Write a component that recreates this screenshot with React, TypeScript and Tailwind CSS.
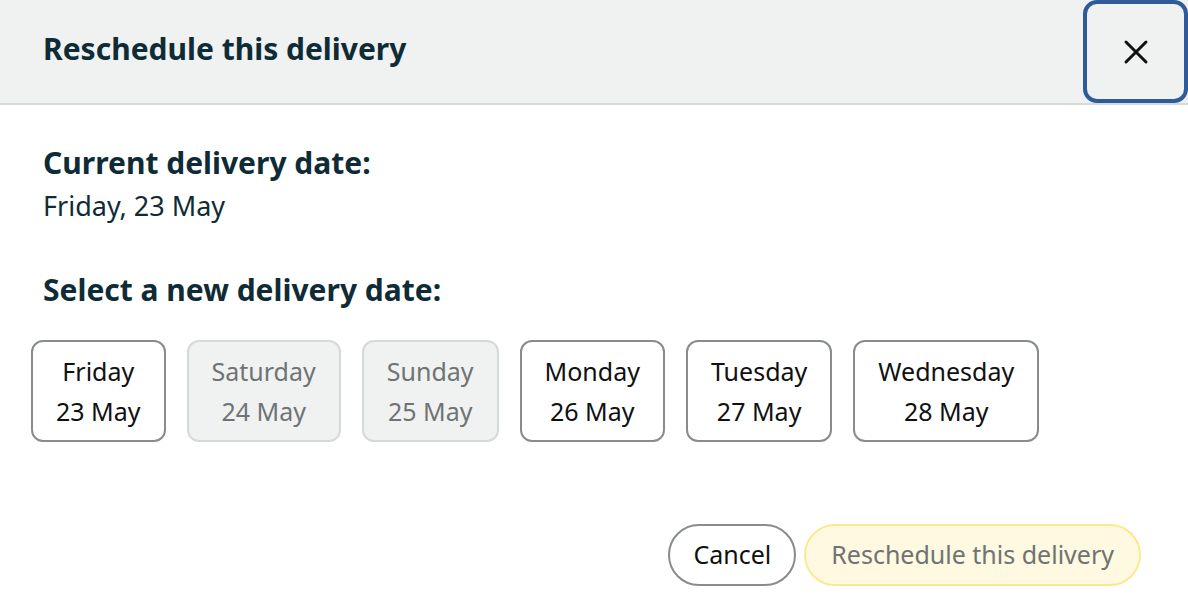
import React from 'react'

const font = { fontFamily: '"Noto Sans", "Open Sans", Arial, sans-serif' }

const dates = [
    { day: 'Friday', date: '23 May', disabled: false },
    { day: 'Saturday', date: '24 May', disabled: true },
    { day: 'Sunday', date: '25 May', disabled: true },
    { day: 'Monday', date: '26 May', disabled: false },
    { day: 'Tuesday', date: '27 May', disabled: false },
    { day: 'Wednesday', date: '28 May', disabled: false },
]

function CloseIcon() {
    return (
        <svg width="26" height="26" viewBox="0 0 26 26" fill="none">
            <path d="M3 3L23 23M23 3L3 23" stroke="#0f1111" strokeWidth="3" strokeLinecap="round" />
        </svg>
    )
}

export default function App() {
    return (
        <div className="w-[1188px] h-[614px] bg-white overflow-hidden" style={font}>
            {/* header */}
            <div className="h-[105px] bg-[#f0f2f2] border-b-2 border-[#d5d9d9] flex items-start justify-between">
                <h1 className="pl-[43px] pt-[29px] text-[30px] leading-[40px] font-bold text-[#0f2c36]">
                    Reschedule this delivery
                </h1>
                <button
                    type="button"
                    className="w-[105px] h-[103px] rounded-[14px] border-[4px] border-[#2f5c99] bg-[#f0f2f2] flex items-center justify-center"
                >
                    <CloseIcon />
                </button>
            </div>

            {/* body */}
            <div className="pl-[43px] pt-[37px]">
                <h2 className="text-[30px] leading-[42px] font-bold text-[#0f2c36]">Current delivery date:</h2>
                <p className="mt-[5px] text-[27px] leading-[34px] text-[#0f2c36]">Friday, 23 May</p>
                <h2 className="mt-[46px] text-[30px] leading-[42px] font-bold text-[#0f2c36]">Select a new delivery date:</h2>
            </div>

            <div className="flex gap-[21px] pl-[31px] mt-[29px]">
                {dates.map((d) => (
                    <button
                        key={d.day}
                        type="button"
                        disabled={d.disabled}
                        className={
                            d.disabled
                                ? 'h-[102px] px-[23px] rounded-[12px] border-2 border-[#d5d9d9] bg-[#f0f2f2] text-[#6f7373] text-[25px] leading-[40px]'
                                : 'h-[102px] px-[23px] rounded-[12px] border-2 border-[#888c8c] bg-white text-[#0f1111] text-[25px] leading-[40px]'
                        }
                    >
                        <div>{d.day}</div>
                        <div>{d.date}</div>
                    </button>
                ))}
            </div>

            {/* footer */}
            <div className="flex justify-end gap-[8px] pr-[47px] mt-[82px]">
                <button
                    type="button"
                    className="h-[62px] px-[23px] rounded-full border-2 border-[#888c8c] bg-white text-[25px] text-[#0f1111]"
                >
                    Cancel
                </button>
                <button
                    type="button"
                    disabled
                    className="h-[62px] px-[25px] rounded-full border-2 border-[#fce98f] bg-[#fef9e0] text-[25px] text-[#6f7373]"
                >
                    Reschedule this delivery
                </button>
            </div>
        </div>
    )
}
